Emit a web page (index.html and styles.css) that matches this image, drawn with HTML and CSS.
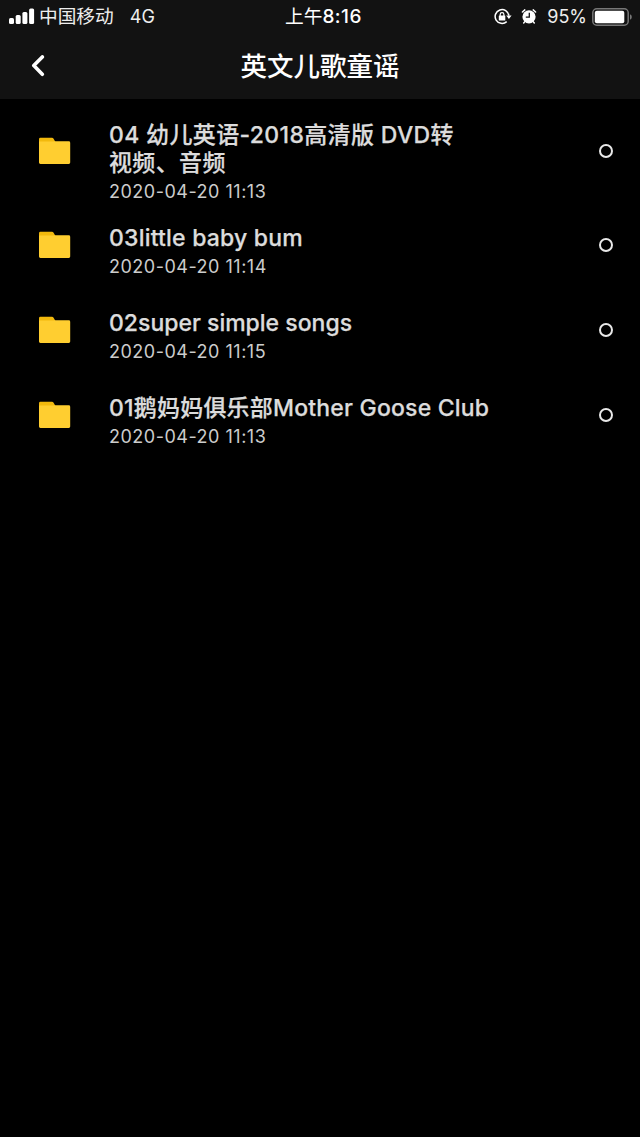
FILE: index.html
```html
<!DOCTYPE html>
<html lang="zh-CN">
<head>
<meta charset="utf-8">
<title>英文儿歌童谣</title>
<link rel="stylesheet" href="styles.css">
</head>
<body>
<svg width="0" height="0" class="defs">
  <symbol id="folder" viewBox="0 0 32 28"><path d="M0 12V2.2Q0 .8 1.4.8H13Q14 .8 14.6 1.8L17 6V12Z" fill="#f2b90d"/><path d="M0 4.6H14.5L16 4.3H29.8Q31.2 4.3 31.2 5.7V25.5Q31.2 26.9 29.8 26.9H1.4Q0 26.9 0 25.5Z" fill="#ffce30"/></symbol>
</svg>
<header class="header">
  <div class="status">
    <div class="status-left">
      <svg class="signal" width="26" height="17" viewBox="0 0 26 17" fill="#fff"><rect x="0" y="10" width="5" height="6" rx="1.5"/><rect x="6.7" y="7" width="5" height="9" rx="1.5"/><rect x="13.4" y="4" width="5" height="12" rx="1.5"/><rect x="20.1" y="0.5" width="5" height="15.5" rx="1.5"/></svg>
      <span class="carrier">中国移动</span>
      <span class="network">4G</span>
    </div>
    <div class="time">上午<span class="clock">8:16</span></div>
    <div class="status-right">
      <svg class="lock" width="18" height="18" viewBox="0 0 18 18" fill="none" stroke="#fff" stroke-width="1.5"><path d="M12.7 13.6A6.9 6.9 0 1 1 14.9 7.6"/><path d="M12.2 7.6H17.6L14.9 11.1Z" fill="#fff" stroke="none"/><rect x="4.8" y="7.5" width="6.5" height="5" rx=".6" fill="#fff" stroke="none"/><path d="M6.2 8V6.4a1.85 1.85 0 0 1 3.7 0V8" stroke-width="1.2"/></svg>
      <svg class="alarm" width="16" height="17" viewBox="0 0 16 17"><circle cx="8" cy="8.8" r="6.6" fill="#fff"/><path d="M1.4 4 3.8 1.9M12.2 1.9 14.6 4M3.6 13.9 2.7 15M12.4 13.9 13.3 15" stroke="#fff" stroke-width="1.5" stroke-linecap="round"/><path d="M8.3 4.8V9.2H4.8" fill="none" stroke="#121212" stroke-width="1.3"/></svg>
      <span class="percent">95%</span>
      <svg class="battery" width="41" height="18" viewBox="0 0 41 18"><rect x=".8" y=".8" width="35.4" height="16.4" rx="4" fill="none" stroke="#777" stroke-width="1.5"/><rect x="2.8" y="2.8" width="29.5" height="12.4" rx="2" fill="#fff"/><path d="M38 6.2Q39.8 7 39.8 9T38 11.8Z" fill="#777"/></svg>
    </div>
  </div>
  <div class="navbar">
    <svg class="back" width="14" height="22" viewBox="0 0 14 22" fill="none" stroke="#fff" stroke-width="3.6" stroke-linecap="round" stroke-linejoin="round"><path d="M11.3 1.9 2.8 10.6 11.3 19.3"/></svg>
    <h1 class="title">英文儿歌童谣</h1>
  </div>
</header>
<main class="list">
  <div class="row row-tall">
    <svg class="folder"><use href="#folder"/></svg>
    <div class="info"><div class="name name-wrap">04 幼儿英语-2018高清版 DVD转<br>视频、音频</div><div class="date">2020-04-20 11:13</div></div>
    <span class="radio"></span>
  </div>
  <div class="row">
    <svg class="folder"><use href="#folder"/></svg>
    <div class="info"><div class="name">03little baby bum</div><div class="date">2020-04-20 11:14</div></div>
    <span class="radio"></span>
  </div>
  <div class="row">
    <svg class="folder"><use href="#folder"/></svg>
    <div class="info"><div class="name name-tight">02super simple songs</div><div class="date">2020-04-20 11:15</div></div>
    <span class="radio"></span>
  </div>
  <div class="row">
    <svg class="folder"><use href="#folder"/></svg>
    <div class="info"><div class="name">01鹅妈妈俱乐部Mother Goose Club</div><div class="date">2020-04-20 11:13</div></div>
    <span class="radio"></span>
  </div>
</main>
</body>
</html>
```
FILE: styles.css
```css
* { box-sizing: border-box; }
body {
  margin: 0;
  min-height: 1137px;
  background: #000;
  color: #dcdcdc;
  font-family: Inter, "Noto Sans CJK SC", sans-serif;
}
svg { display: block; flex: none; }
.defs { position: absolute; }
.header { height: 99px; background: #121212; color: #fff; }
.status {
  display: grid;
  grid-template-columns: 276px 1fr 200px;
  height: 33px;
  padding: 0 7px 0 9px;
  font-size: 18.7px;
  line-height: 33px;
  white-space: nowrap;
}
.status-left, .status-right { display: flex; align-items: center; }
.status-right { justify-content: flex-end; }
.carrier { margin-left: 4px; color: #eee; }
.network { margin-left: 16px; font-size: 18px; color: #eee; }
.clock { font-size: 19px; font-weight: 500; letter-spacing: .5px; }
.alarm { margin-left: 9px; }
.percent { margin-left: 10px; font-size: 18px; color: #eee; }
.battery { margin-left: 5px; }
.navbar {
  display: grid;
  grid-template-columns: 60px 1fr 60px;
  align-items: center;
  height: 66px;
}
.back { margin-left: 31px; }
.title {
  margin: 0;
  font-size: 26.5px;
  font-weight: 500;
  line-height: 40px;
  text-align: center;
}
.list { padding-top: 22px; }
.row {
  display: grid;
  grid-template-columns: 70px 1fr 14px;
  height: 85px;
  padding: 0 27px 0 39px;
}
.row-tall { height: 103px; }
.folder { width: 32px; height: 28px; margin-top: 7px; }
.row-tall .folder { margin-top: 16px; }
.name {
  font-size: 23px;
  font-weight: 500;
  line-height: 28px;
  letter-spacing: .2px;
  white-space: nowrap;
  -webkit-text-stroke: .25px currentColor;
}
.name-wrap { letter-spacing: .35px; }
.name-tight { letter-spacing: 0; }
.date { margin-top: 2px; font-size: 18px; line-height: 26px; letter-spacing: .5px; color: #ccc; }
.radio {
  width: 14px;
  height: 14px;
  margin-top: 14px;
  border: 2px solid #e8e8e8;
  border-radius: 50%;
}
.row-tall .radio { margin-top: 23px; }
```
